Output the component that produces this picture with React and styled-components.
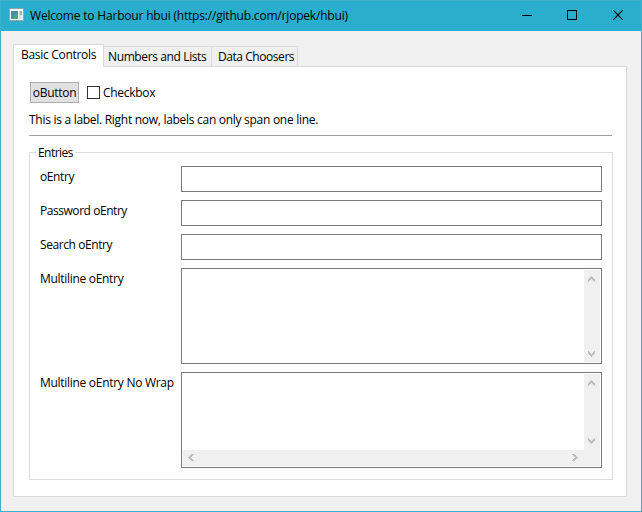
import React from "react";
import styled, { createGlobalStyle } from "styled-components";

const Global = createGlobalStyle`
  * { box-sizing: border-box; }
  body { margin: 0; overflow: hidden; }
`;

const Window = styled.div`
  width: 642px;
  height: 512px;
  display: flex;
  flex-direction: column;
  background: #f0f0f0;
  border: 1px solid #3fb0cc;
  border-top: 0;
  font: 12px/16px "Open Sans", "Noto Sans", sans-serif;
  color: #000;
`;

const Text = styled.span`
  white-space: nowrap;
  letter-spacing: ${(p) => p.$track || 0}px;
`;

const TitleBar = styled.header`
  height: 31px;
  flex: none;
  display: flex;
  align-items: center;
  padding: 0 0 2px 8px;
  background: #2aaecd;
  border-top: 1px solid #3fb0cc;
`;

const Title = styled(Text)`
  flex: 1;
  margin-left: 5px;
  padding-top: 2px;
`;

const Caption = styled.svg`
  flex: none;
  width: 10px;
  height: 10px;
  margin-right: ${(p) => p.$gap}px;
  fill: none;
  stroke: #000;
`;

const Tabs = styled.nav`
  height: 22px;
  margin: 13px 0 0 12px;
  display: flex;
  align-items: flex-end;
`;

const Tab = styled.button`
  width: ${(p) => p.$width}px;
  height: 20px;
  padding: 1px 0 0 ${(p) => p.$inset}px;
  border: 1px solid #d9d9d9;
  border-width: 1px 1px 0 0;
  background: #f0f0f0;
  font: inherit;
  color: inherit;
  text-align: left;
`;

const ActiveTab = styled(Tab)`
  height: 23px;
  margin-bottom: -1px;
  padding-top: 0;
  padding-bottom: 2px;
  border-left-width: 1px;
  background: #fff;
  z-index: 1;
`;

const Panel = styled.main`
  width: 614px;
  height: 431px;
  margin-left: 12px;
  padding: 15px 13px 16px 15px;
  display: flex;
  flex-direction: column;
  background: #fff;
  border: 1px solid #d9d9d9;
`;

const Controls = styled.div`
  height: 21px;
  display: flex;
  align-items: center;
  margin-left: 1px;
`;

const Button = styled.button`
  width: 49px;
  height: 21px;
  padding: 1px 0 0;
  border: 1px solid #adadad;
  background: #e1e1e1;
  font: inherit;
  color: inherit;
`;

const CheckLabel = styled.label`
  display: flex;
  align-items: center;
  gap: 3px;
  margin-left: 8px;
`;

const CheckText = styled(Text)`
  padding-top: 1px;
`;

const Box = styled.span`
  width: 13px;
  height: 13px;
  border: 1px solid #333;
  background: #fff;
`;

const Info = styled(Text)`
  margin-top: 9px;
  height: 16px;
`;

const Separator = styled.hr`
  width: 583px;
  height: 1px;
  margin: 7px 0 0;
  border: 0;
  background: #a0a0a0;
`;

const Group = styled.section`
  width: 584px;
  height: 328px;
  margin-top: 16px;
  padding: 0 10px;
  border: 1px solid #dcdcdc;
`;

const Legend = styled.h2`
  width: 39px;
  height: 16px;
  margin: -8px 0 5px -4px;
  padding-left: 2px;
  background: #fff;
  font: inherit;
`;

const Form = styled.div`
  display: grid;
  grid-template-columns: 141px 421px;
  row-gap: 8px;
`;

const FieldLabel = styled(Text)`
  padding-top: 3px;
`;

const Entry = styled.div`
  height: 26px;
  border: 1px solid #7a7a7a;
  background: #fff;
`;

const TextArea = styled.div`
  height: 96px;
  padding: 1px;
  display: grid;
  grid-template-columns: 1fr 16px;
  grid-template-rows: 1fr ${(p) => (p.$noWrap ? "16px" : "")};
  border: 1px solid #7a7a7a;
  background: #fff;
`;

const VBar = styled.div`
  grid-column: 2;
  display: flex;
  flex-direction: column;
  align-items: center;
  justify-content: space-between;
  padding: 6px 1px ${(p) => p.$end}px 0;
  background: #f0f0f0;
`;

const HBar = styled.div`
  display: flex;
  align-items: center;
  justify-content: space-between;
  padding: 0 6px 1px 5px;
  background: #f0f0f0;
`;

const Corner = styled.div`
  background: #f0f0f0;
`;

const Arrow = styled.svg`
  flex: none;
  display: block;
  fill: #bfbfbf;
`;

const ARROWS = {
  up: [7, 6, "M3 0h1v1h1v1h1v1h1v3h-1v-1h-1v-1h-1v-1h-1v1h-1v1h-1v1h-1v-3h1v-1h1v-1h1z"],
  down: [7, 6, "M3 6h1v-1h1v-1h1v-1h1v-3h-1v1h-1v1h-1v1h-1v-1h-1v-1h-1v-1h-1v3h1v1h1v1h1z"],
  left: [6, 7, "M0 3v1h1v1h1v1h1v1h3v-1h-1v-1h-1v-1h-1v-1h1v-1h1v-1h1v-1h-3v1h-1v1h-1v1z"],
  right: [6, 7, "M6 3v1h-1v1h-1v1h-1v1h-3v-1h1v-1h1v-1h1v-1h-1v-1h-1v-1h-1v-1h3v1h1v1h1v1z"],
};

function ScrollArrow({ dir }) {
  const [w, h, d] = ARROWS[dir];
  return (
    <Arrow width={w} height={h} viewBox={`0 0 ${w} ${h}`} shapeRendering="crispEdges">
      <path d={d} />
    </Arrow>
  );
}

function VerticalScroll({ end = 5 }) {
  return (
    <VBar $end={end}>
      <ScrollArrow dir="up" />
      <ScrollArrow dir="down" />
    </VBar>
  );
}

function AppIcon() {
  return (
    <svg width="16" height="14" viewBox="0 0 16 14">
      <defs>
        <linearGradient id="pane" x1="0" y1="0" x2="1" y2="1">
          <stop offset="0" stopColor="#4a80b4" />
          <stop offset="1" stopColor="#4fa97c" />
        </linearGradient>
      </defs>
      <rect width="15" height="13" fill="#8fa3aa" />
      <rect x="1" y="1" width="13" height="11" fill="#f7f8f8" />
      <rect x="2" y="3" width="7" height="8" fill="url(#pane)" />
      <rect x="10" y="3" width="1" height="8" fill="#d5dadb" />
      <rect x="11" y="3" width="2" height="4" fill="#8fb4aa" />
      <rect x="11" y="7" width="2" height="4" fill="#dfe3e3" />
    </svg>
  );
}

export default function App() {
  return (
    <Window>
      <Global />
      <TitleBar>
        <AppIcon />
        <Title $track={-0.19}>Welcome to Harbour hbui (https://github.com/rjopek/hbui)</Title>
        <Caption $gap={35} viewBox="0 0 10 10"><path d="M0 5.5h10" /></Caption>
        <Caption $gap={36} viewBox="0 0 10 10"><rect x=".5" y=".5" width="9" height="9" /></Caption>
        <Caption $gap={18} viewBox="0 0 10 10"><path strokeWidth="1.2" d="M0 0 10 10M10 0 0 10" /></Caption>
      </TitleBar>
      <Tabs>
        <ActiveTab $width={91} $inset={7}><Text $track={-0.3}>Basic Controls</Text></ActiveTab>
        <Tab $width={108} $inset={4}><Text $track={-0.38}>Numbers and Lists</Text></Tab>
        <Tab $width={86} $inset={6}><Text $track={-0.44}>Data Choosers</Text></Tab>
      </Tabs>
      <Panel>
        <Controls>
          <Button><Text $track={-0.28}>oButton</Text></Button>
          <CheckLabel><Box /><CheckText $track={-0.28}>Checkbox</CheckText></CheckLabel>
        </Controls>
        <Info $track={-0.285}>This is a label. Right now, labels can only span one line.</Info>
        <Separator />
        <Group>
          <Legend><Text $track={-0.55}>Entries</Text></Legend>
          <Form>
            <FieldLabel $track={-0.4}>oEntry</FieldLabel>
            <Entry />
            <FieldLabel $track={-0.45}>Password oEntry</FieldLabel>
            <Entry />
            <FieldLabel $track={-0.42}>Search oEntry</FieldLabel>
            <Entry />
            <FieldLabel $track={-0.3}>Multiline oEntry</FieldLabel>
            <TextArea><div /><VerticalScroll /></TextArea>
            <FieldLabel $track={-0.29}>Multiline oEntry No Wrap</FieldLabel>
            <TextArea $noWrap>
              <div />
              <VerticalScroll end={6} />
              <HBar><ScrollArrow dir="left" /><ScrollArrow dir="right" /></HBar>
              <Corner />
            </TextArea>
          </Form>
        </Group>
      </Panel>
    </Window>
  );
}
